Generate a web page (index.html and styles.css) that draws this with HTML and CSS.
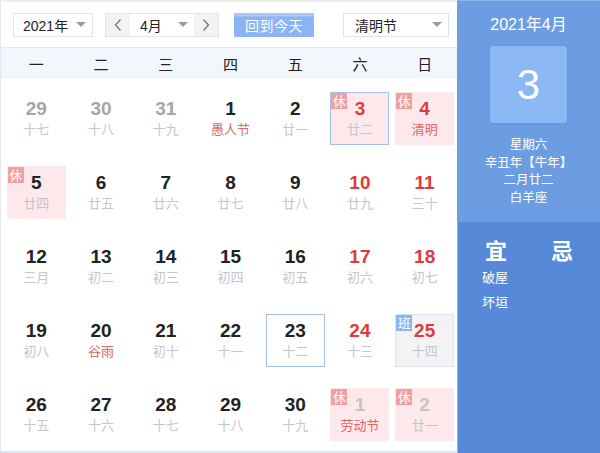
FILE: index.html
```html
<!DOCTYPE html>
<html lang="zh">
<head>
<meta charset="utf-8">
<link rel="stylesheet" href="styles.css">
</head>
<body>
<div class="wrap">
  <div class="left">
    <div class="toolbar">
      <div class="select year"><span>2021年</span><i class="tri"></i></div>
      <div class="monthgroup">
        <div class="arrow"><svg width="10" height="14" viewBox="0 0 10 14"><path d="M7.5 1.5 L2.5 7 L7.5 12.5" fill="none" stroke="#777" stroke-width="1.3"/></svg></div>
        <div class="select month"><span>4月</span><i class="tri"></i></div>
        <div class="arrow"><svg width="10" height="14" viewBox="0 0 10 14"><path d="M2.5 1.5 L7.5 7 L2.5 12.5" fill="none" stroke="#777" stroke-width="1.3"/></svg></div>
      </div>
      <div class="today-btn">回到今天</div>
      <div class="select holiday"><span>清明节</span><i class="tri"></i></div>
    </div>
    <div class="weekhead">
      <span>一</span><span>二</span><span>三</span><span>四</span><span>五</span><span>六</span><span>日</span>
    </div>
    <div class="grid">
      <div class="cell"><div class="box other"><b>29</b><em>十七</em></div></div>
      <div class="cell"><div class="box other"><b>30</b><em>十八</em></div></div>
      <div class="cell"><div class="box other"><b>31</b><em>十九</em></div></div>
      <div class="cell"><div class="box"><b>1</b><em class="fest">愚人节</em></div></div>
      <div class="cell"><div class="box"><b>2</b><em>廿一</em></div></div>
      <div class="cell"><div class="box rest today"><i class="badge">休</i><b class="red">3</b><em>廿二</em></div></div>
      <div class="cell"><div class="box rest"><i class="badge">休</i><b class="red">4</b><em class="fest">清明</em></div></div>

      <div class="cell"><div class="box rest"><i class="badge">休</i><b>5</b><em>廿四</em></div></div>
      <div class="cell"><div class="box"><b>6</b><em>廿五</em></div></div>
      <div class="cell"><div class="box"><b>7</b><em>廿六</em></div></div>
      <div class="cell"><div class="box"><b>8</b><em>廿七</em></div></div>
      <div class="cell"><div class="box"><b>9</b><em>廿八</em></div></div>
      <div class="cell"><div class="box"><b class="red">10</b><em>廿九</em></div></div>
      <div class="cell"><div class="box"><b class="red">11</b><em>三十</em></div></div>

      <div class="cell"><div class="box"><b>12</b><em>三月</em></div></div>
      <div class="cell"><div class="box"><b>13</b><em>初二</em></div></div>
      <div class="cell"><div class="box"><b>14</b><em>初三</em></div></div>
      <div class="cell"><div class="box"><b>15</b><em>初四</em></div></div>
      <div class="cell"><div class="box"><b>16</b><em>初五</em></div></div>
      <div class="cell"><div class="box"><b class="red">17</b><em>初六</em></div></div>
      <div class="cell"><div class="box"><b class="red">18</b><em>初七</em></div></div>

      <div class="cell"><div class="box"><b>19</b><em>初八</em></div></div>
      <div class="cell"><div class="box"><b>20</b><em class="fest">谷雨</em></div></div>
      <div class="cell"><div class="box"><b>21</b><em>初十</em></div></div>
      <div class="cell"><div class="box"><b>22</b><em>十一</em></div></div>
      <div class="cell"><div class="box selected"><b>23</b><em>十二</em></div></div>
      <div class="cell"><div class="box"><b class="red">24</b><em>十三</em></div></div>
      <div class="cell"><div class="box work"><i class="badge blue">班</i><b class="red">25</b><em>十四</em></div></div>

      <div class="cell"><div class="box"><b>26</b><em>十五</em></div></div>
      <div class="cell"><div class="box"><b>27</b><em>十六</em></div></div>
      <div class="cell"><div class="box"><b>28</b><em>十七</em></div></div>
      <div class="cell"><div class="box"><b>29</b><em>十八</em></div></div>
      <div class="cell"><div class="box"><b>30</b><em>十九</em></div></div>
      <div class="cell"><div class="box rest other2"><i class="badge">休</i><b>1</b><em class="fest">劳动节</em></div></div>
      <div class="cell"><div class="box rest other2"><i class="badge">休</i><b>2</b><em>廿一</em></div></div>
    </div>
  </div>
  <div class="right">
    <div class="info">
      <div class="ym">2021年4月</div>
      <div class="bigday">3</div>
      <div class="lines">
        <div>星期六</div>
        <div>辛丑年【牛年】</div>
        <div>二月廿二</div>
        <div>白羊座</div>
      </div>
    </div>
    <div class="yiji">
      <div class="col">
        <div class="ttl">宜</div>
        <div class="item">破屋</div>
        <div class="item">坏垣</div>
      </div>
      <div class="col">
        <div class="ttl">忌</div>
      </div>
    </div>
  </div>
</div>
</body>
</html>
```
FILE: styles.css
```css
* { box-sizing: border-box; }
html, body { margin: 0; padding: 0; }
body {
  width: 600px;
  height: 453px;
  overflow: hidden;
  background: #fff;
  font-family: "Liberation Sans", Arial, "Noto Sans CJK SC", sans-serif;
}
.wrap {
  display: flex;
  width: 600px;
  height: 453px;
}
.left {
  flex: 0 0 457px;
  width: 457px;
  height: 453px;
  border-left: 1px solid #e6e9ee;
  border-top: 2px solid #eeeeee;
  border-bottom: 2px solid #dbe6f3;
  display: flex;
  flex-direction: column;
}
.toolbar {
  height: 46px;
  display: flex;
  align-items: center;
  padding: 0 0 0 12px;
  border-bottom: 1px solid #e2e9f3;
}
.select {
  height: 24px;
  border: 1px solid #dde5ef;
  background: #fff;
  display: flex;
  align-items: center;
  justify-content: space-between;
  padding: 0 6px 0 9px;
  font-size: 14px;
  color: #222;
}
.tri {
  width: 0; height: 0;
  border-left: 5px solid transparent;
  border-right: 5px solid transparent;
  border-top: 5px solid #999;
}
.year { width: 80px; }
.monthgroup {
  display: flex;
  margin-left: 12px;
  height: 24px;
  border: 1px solid #dde5ef;
}
.arrow {
  width: 24px;
  height: 22px;
  background: #f3f3f3;
  display: flex;
  align-items: center;
  justify-content: center;
}
.month {
  width: 64px;
  height: 22px;
  border: none;
  padding-left: 10px;
}
.today-btn {
  margin-left: 15px;
  width: 80px;
  height: 24px;
  background: linear-gradient(#a9c8f6 0, #a9c8f6 3px, #8ab4f3 4px, #8ab4f3 100%);
  color: #fff;
  font-size: 14px;
  display: flex;
  align-items: center;
  justify-content: center;
  letter-spacing: 0.5px;
}
.holiday {
  margin-left: 29px;
  width: 106px;
  padding-left: 11px;
}
.weekhead {
  height: 31px;
  background: #f3f7fd;
  display: grid;
  grid-template-columns: repeat(7, 1fr);
  padding-left: 3px;
  align-items: center;
  font-size: 15px;
  color: #222;
  font-family: "Noto Sans CJK SC", sans-serif;
}
.weekhead span { text-align: center; }
.grid {
  flex: 1;
  display: grid;
  grid-template-columns: repeat(7, 1fr);
  grid-template-rows: repeat(5, 1fr);
  padding: 2px 0 0 3px;
}
.cell {
  display: flex;
  align-items: center;
  justify-content: center;
}
.box {
  position: relative;
  width: 59px;
  height: 53px;
  display: flex;
  flex-direction: column;
  align-items: center;
  justify-content: center;
  border: 1px solid transparent;
}
.box b {
  font-size: 19px;
  line-height: 22px;
  font-weight: bold;
  color: #222;
  font-family: "Liberation Sans", Arial, sans-serif;
}
.box b.red { color: #df3b3b; }
.box em {
  font-style: normal;
  font-size: 13px;
  line-height: 18px;
  color: #c3c6cf;
  font-family: "Noto Sans CJK SC", sans-serif;
}
.box em.fest { color: #e46565; }
.box.other b { color: #a6a6a6; }
.box.other2 b { color: #c4c4c4; }
.box.rest { background: #fde8ec; }
.box.today { border-color: #a3c0ec; }
.box.selected { border-color: #a3c0ec; }
.box.work { background: #f3f3f3; border-color: #dbe6f5; }
.badge {
  position: absolute;
  left: 0;
  top: 0;
  width: 16px;
  height: 16px;
  background: #f0a0a0;
  color: #fff;
  font-style: normal;
  font-size: 13px;
  line-height: 16px;
  text-align: center;
  font-family: "Noto Sans CJK SC", sans-serif;
}
.badge.blue { background: #8ab4f3; }
.right {
  flex: 1 1 auto;
  min-width: 0;
  overflow: hidden;
  display: flex;
  flex-direction: column;
  color: #fff;
  font-family: "Liberation Sans", Arial, "Noto Sans CJK SC", sans-serif;
}
.info {
  height: 222px;
  background: #6c9ce1;
  border-top: 1px solid #8db3ea;
  display: flex;
  flex-direction: column;
  align-items: center;
}
.ym {
  margin-top: 14px;
  font-size: 16px;
  line-height: 20px;
}
.bigday {
  margin-top: 11px;
  width: 77px;
  height: 77px;
  background: #8cb9f6;
  border-radius: 3px;
  box-shadow: 0 0 2px rgba(60,100,180,0.35);
  font-size: 42px;
  display: flex;
  align-items: center;
  justify-content: center;
}
.lines {
  margin-top: 12px;
  font-size: 12.5px;
  line-height: 17.5px;
  text-align: center;
  font-family: "Noto Sans CJK SC", sans-serif;
}
.yiji {
  flex: 1;
  background: #568ad9;
  border-left: 1px solid #8db3ea;
  display: flex;
  padding: 12px 0 0 24px;
  font-family: "Noto Sans CJK SC", sans-serif;
}
.col { width: 66px; flex: 0 0 66px; }
.ttl {
  font-size: 22px;
  font-weight: bold;
  line-height: 30px;
  padding-left: 3px;
}
.item {
  font-size: 13px;
  line-height: 25px;
}
```
